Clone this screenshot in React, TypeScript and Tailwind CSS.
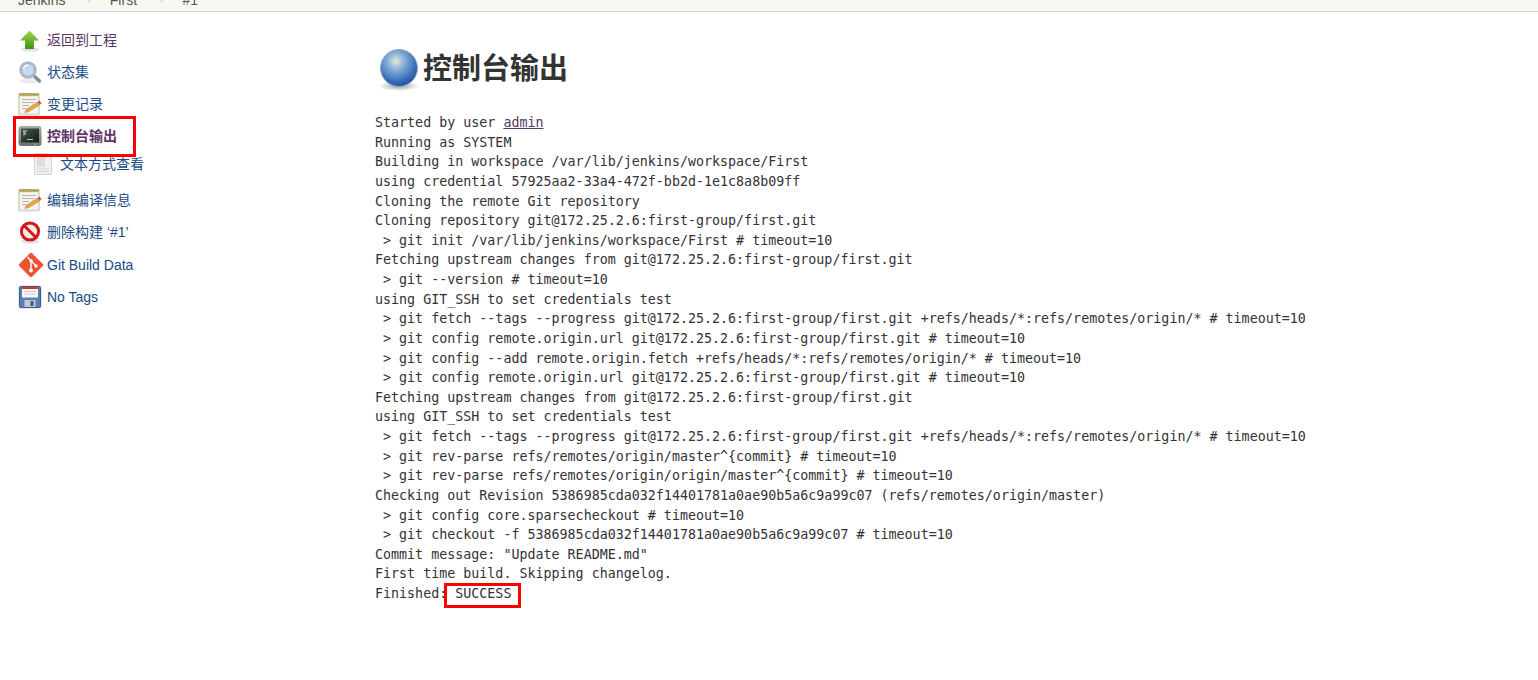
const logLines = [
  "Running as SYSTEM",
  "Building in workspace /var/lib/jenkins/workspace/First",
  "using credential 57925aa2-33a4-472f-bb2d-1e1c8a8b09ff",
  "Cloning the remote Git repository",
  "Cloning repository git@172.25.2.6:first-group/first.git",
  " > git init /var/lib/jenkins/workspace/First # timeout=10",
  "Fetching upstream changes from git@172.25.2.6:first-group/first.git",
  " > git --version # timeout=10",
  "using GIT_SSH to set credentials test",
  " > git fetch --tags --progress git@172.25.2.6:first-group/first.git +refs/heads/*:refs/remotes/origin/* # timeout=10",
  " > git config remote.origin.url git@172.25.2.6:first-group/first.git # timeout=10",
  " > git config --add remote.origin.fetch +refs/heads/*:refs/remotes/origin/* # timeout=10",
  " > git config remote.origin.url git@172.25.2.6:first-group/first.git # timeout=10",
  "Fetching upstream changes from git@172.25.2.6:first-group/first.git",
  "using GIT_SSH to set credentials test",
  " > git fetch --tags --progress git@172.25.2.6:first-group/first.git +refs/heads/*:refs/remotes/origin/* # timeout=10",
  " > git rev-parse refs/remotes/origin/master^{commit} # timeout=10",
  " > git rev-parse refs/remotes/origin/origin/master^{commit} # timeout=10",
  "Checking out Revision 5386985cda032f14401781a0ae90b5a6c9a99c07 (refs/remotes/origin/master)",
  " > git config core.sparsecheckout # timeout=10",
  " > git checkout -f 5386985cda032f14401781a0ae90b5a6c9a99c07 # timeout=10",
  'Commit message: "Update README.md"',
  "First time build. Skipping changelog.",
];

function ArrowIcon() {
  return (
    <svg width="24" height="24" viewBox="0 0 24 24">
      <defs>
        <linearGradient id="ag" x1="0" y1="0" x2="0" y2="1">
          <stop offset="0" stopColor="#a4d455" />
          <stop offset="1" stopColor="#3f9410" />
        </linearGradient>
      </defs>
      <ellipse cx="12" cy="21.5" rx="9" ry="2" fill="#e2e2e2" />
      <path d="M11.5 2.5 L21 12.5 H16 V21 H7 V12.5 H2 Z" fill="url(#ag)" />
    </svg>
  );
}

function SearchIcon() {
  return (
    <svg width="24" height="24" viewBox="0 0 24 24">
      <ellipse cx="11" cy="21" rx="10" ry="2.5" fill="#ececec" />
      <path d="M15 15 L21.5 21" stroke="#8c8c8c" strokeWidth="3.4" strokeLinecap="round" />
      <circle cx="10" cy="10" r="7.8" fill="#c4d8f0" stroke="#b8b8b8" strokeWidth="2" />
      <circle cx="10" cy="10" r="6.4" fill="none" stroke="#7a9ccc" strokeWidth="0.7" />
      <path d="M5.5 9 A5 5 0 0 1 10 5" stroke="#fff" strokeWidth="1.4" fill="none" />
    </svg>
  );
}

function NotepadIcon() {
  return (
    <svg width="24" height="24" viewBox="0 0 24 24">
      <rect x="1" y="2" width="20" height="20.5" fill="#f5f5ee" stroke="#b8b8b0" />
      <rect x="1.5" y="1" width="19" height="3.2" fill="#c8b878" />
      <path d="M2 1.5 V3.5 M4 1.5 V3.5 M6 1.5 V3.5 M8 1.5 V3.5 M10 1.5 V3.5 M12 1.5 V3.5 M14 1.5 V3.5 M16 1.5 V3.5 M18 1.5 V3.5 M20 1.5 V3.5" stroke="#8c7c3c" strokeWidth="0.7" />
      <path d="M4 7.5 H18 M4 10.5 H16 M4 13.5 H11 M4 16.5 H8" stroke="#b4b4b4" />
      <rect x="1" y="21.5" width="20" height="2" fill="#d8d8d8" />
      <path d="M8 17.5 L19.5 10 L22 12.5 L11 19.5 L7 20.5 Z" fill="#e8a84a" stroke="#a8752a" strokeWidth="0.5" />
      <path d="M19.5 10 L22 12.5 L23.5 11 L21.5 8.8 Z" fill="#d9503f" />
    </svg>
  );
}

function TerminalIcon() {
  return (
    <svg width="24" height="24" viewBox="0 0 24 24">
      <defs>
        <linearGradient id="tg" x1="0" y1="0" x2="0" y2="1">
          <stop offset="0" stopColor="#a8aaa4" />
          <stop offset="1" stopColor="#6e706a" />
        </linearGradient>
        <linearGradient id="ts" x1="0" y1="0" x2="1" y2="1">
          <stop offset="0" stopColor="#4a5a48" />
          <stop offset="1" stopColor="#0e1c12" />
        </linearGradient>
      </defs>
      <rect x="0.5" y="2" width="23" height="20" rx="3" fill="url(#tg)" />
      <rect x="3" y="4.5" width="18" height="14" rx="0.5" fill="url(#ts)" />
      <path d="M5 8 L8 9.5 L5 11 M5 7 H9" stroke="#e4ece4" strokeWidth="0.9" fill="none" />
      <rect x="9" y="15" width="6" height="1" fill="#b8c8b8" />
      <circle cx="17" cy="20.2" r="0.8" fill="#a6e060" />
    </svg>
  );
}

function PageIcon() {
  return (
    <svg width="18" height="22" viewBox="0 0 18 22">
      <path d="M0.5 0.5 H13 L17.5 5 V21.5 H0.5 Z" fill="#f0f0ee" stroke="#d4d4d4" />
      <path d="M3 3 H11 V14 H3 Z" fill="#dededc" />
      <path d="M3 16 H15 M3 18.5 H15" stroke="#d6d6d6" />
    </svg>
  );
}

function NoIcon() {
  return (
    <svg width="24" height="24" viewBox="0 0 24 24">
      <ellipse cx="12" cy="21.5" rx="9" ry="2" fill="#e0e0e0" />
      <circle cx="12" cy="11.5" r="8.6" fill="#f4eaea" stroke="#cc1a1e" strokeWidth="3" />
      <path d="M6 5.5 L18 17.5" stroke="#cc1a1e" strokeWidth="3" />
    </svg>
  );
}

function GitIcon() {
  return (
    <svg width="26" height="26" viewBox="0 0 26 26">
      <path d="M1.2 12 L12 1.2 Q13 0.4 14 1.2 L24.8 12 Q25.6 13 24.8 14 L14 24.8 Q13 25.6 12 24.8 L1.2 14 Q0.4 13 1.2 12 Z" fill="#f05133" />
      <path d="M9.5 5 L13 8.8 V18.5 M13 8.8 L18 14" stroke="#fff" strokeWidth="1.4" fill="none" />
      <circle cx="13" cy="8.8" r="1.7" fill="#fff" />
      <circle cx="13" cy="18.5" r="1.9" fill="#fff" />
      <circle cx="18" cy="14" r="1.7" fill="#fff" />
    </svg>
  );
}

function SaveIcon() {
  return (
    <svg width="24" height="24" viewBox="0 0 24 24">
      <rect x="0" y="0" width="24" height="24" fill="#e8e8ea" />
      <rect x="1.5" y="1.5" width="21" height="21" rx="1.5" fill="#5c7eb4" stroke="#3f5a8c" />
      <rect x="4" y="2" width="16" height="10.5" fill="#f8f8f8" />
      <rect x="4" y="2" width="16" height="2" fill="#d8352a" />
      <path d="M6 6.5 H18 M6 9 H18" stroke="#ccc" />
      <rect x="6.5" y="15" width="11" height="7" fill="#c2c8d0" />
      <rect x="12.5" y="16" width="3" height="5" fill="#4a5a78" />
    </svg>
  );
}

function GlobeIcon() {
  return (
    <svg width="48" height="48" viewBox="0 0 48 48">
      <defs>
        <radialGradient id="gb" cx="0.42" cy="0.32" r="0.7">
          <stop offset="0" stopColor="#e8eac8" />
          <stop offset="0.3" stopColor="#8fb4dc" />
          <stop offset="0.75" stopColor="#3a6fb8" />
          <stop offset="1" stopColor="#1f4f98" />
        </radialGradient>
        <radialGradient id="gs" cx="0.5" cy="0.5" r="0.5">
          <stop offset="0" stopColor="#999" />
          <stop offset="1" stopColor="#fff" />
        </radialGradient>
      </defs>
      <ellipse cx="24" cy="41" rx="20" ry="5" fill="url(#gs)" />
      <circle cx="24" cy="23" r="18.5" fill="url(#gb)" stroke="#8fa8cc" />
    </svg>
  );
}

const items = [
  { icon: <ArrowIcon />, label: "返回到工程", visited: true },
  { icon: <SearchIcon />, label: "状态集" },
  { icon: <NotepadIcon />, label: "变更记录" },
];
const itemsAfter = [
  { icon: <NotepadIcon />, label: "编辑编译信息" },
  { icon: <NoIcon />, label: "删除构建 ‘#1’" },
];
const itemsGit = [
  { icon: <GitIcon />, label: "Git Build Data" },
  { icon: <SaveIcon />, label: "No Tags" },
];

function Item({ icon, label, visited }: { icon: React.ReactNode; label: string; visited?: boolean }) {
  return (
    <div className="flex h-8 items-center">
      <div className="flex w-[32px] shrink-0 pl-[3px]">{icon}</div>
      <a className={visited ? "text-[#5c3566]" : "text-[#204a87]"}>{label}</a>
    </div>
  );
}

function Crumb({ label }: { label: string }) {
  return <span className="-translate-y-[8px] whitespace-nowrap">{label}</span>;
}

export default function App() {
  return (
    <div className="relative min-h-[680px] overflow-hidden bg-white font-['Liberation_Sans','Noto_Sans_CJK_SC',sans-serif] text-[14px]">
      <div className="flex h-3 items-start border-b border-[#d3d7cf] bg-[#f6f8f1] pl-[18px] leading-[16px] text-[#555753]">
        <Crumb label="Jenkins" />
        <span className="ml-[22px] mr-[19px] -translate-y-[8px] text-[10px] text-[#c0c0bc]">›</span>
        <Crumb label="First" />
        <span className="ml-[23px] mr-[19px] -translate-y-[8px] text-[10px] text-[#c0c0bc]">›</span>
        <Crumb label="#1" />
      </div>
      <div className="flex">
        <aside className="w-[375px] shrink-0 pl-[15px] pt-[12px]">
          {items.map((it) => (
            <Item key={it.label} {...it} />
          ))}
          <div className="relative flex h-8 items-center font-bold text-[#5c3566]">
            <div className="flex w-[32px] shrink-0 pl-[3px]"><TerminalIcon /></div>
            <a>控制台输出</a>
            <div className="absolute left-[-2px] top-[-4px] h-[41px] w-[123px] border-[3px] border-[#ff0000]" />
          </div>
          <div className="flex h-6 items-center text-[#204a87]">
            <div className="flex w-[45px] shrink-0 justify-start pl-[19px]"><PageIcon /></div>
            <a>文本方式查看</a>
          </div>
          <div className="h-2" />
          {itemsAfter.map((it) => (
            <Item key={it.label} {...it} />
          ))}
          <div className="h-px" />
          {itemsGit.map((it) => (
            <Item key={it.label} {...it} />
          ))}
        </aside>
        <main className="flex-1">
          <h1 className="mt-[33px] flex h-[48px] items-center text-[29px] font-bold leading-[48px] text-[#333]">
            <GlobeIcon />
            <span>控制台输出</span>
          </h1>
          <pre className="mt-[20px] font-['DejaVu_Sans_Mono',monospace] text-[13.33px] leading-[19.63px] text-[#333]">
            Started by user <a className="text-[#5c3566] underline">admin</a>
            {"\n"}
            {logLines.join("\n")}
            {"\n"}Finished: <span className="relative">SUCCESS<span className="absolute left-[-11px] top-[-3px] h-[25px] w-[77px] border-[3px] border-[#ff0000]" /></span>
          </pre>
        </main>
      </div>
    </div>
  );
}
